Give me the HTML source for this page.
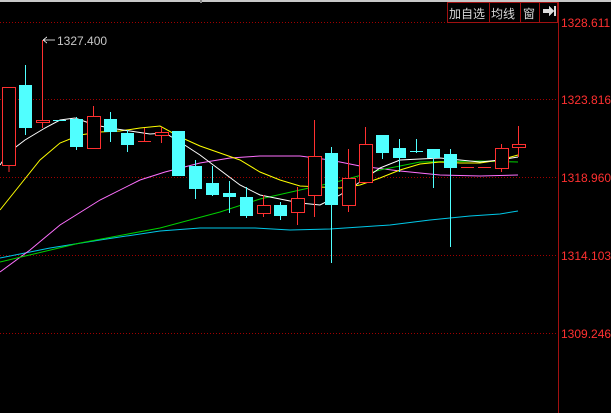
<!DOCTYPE html>
<html><head><meta charset="utf-8"><style>
html,body{margin:0;padding:0;background:#000;width:611px;height:413px;overflow:hidden}
svg{display:block}
</style></head><body>
<svg width="611" height="413" xmlns="http://www.w3.org/2000/svg" shape-rendering="crispEdges">
<rect width="611" height="413" fill="#000"/>
<rect x="0" y="0" width="611" height="2" fill="#c8c8c8"/>
<rect x="200" y="0" width="2" height="3" fill="#888"/>
<g stroke="#a00000" stroke-dasharray="1 2" stroke-width="1">
<line x1="0" y1="22.5" x2="556" y2="22.5"/>
<line x1="0" y1="99.5" x2="556" y2="99.5"/>
<line x1="0" y1="177.5" x2="556" y2="177.5"/>
<line x1="0" y1="255.5" x2="556" y2="255.5"/>
<line x1="0" y1="333.5" x2="556" y2="333.5"/>
</g>
<line x1="558.5" y1="2" x2="558.5" y2="413" stroke="#a01010"/>
<g font-family="Liberation Sans, sans-serif" font-size="12" fill="#ff3030">
<text x="561" y="27">1328.611</text>
<text x="561" y="104">1323.816</text>
<text x="561" y="182">1318.960</text>
<text x="561" y="260">1314.103</text>
<text x="561" y="338">1309.246</text>
</g>
<g fill="none" stroke="#a01010">
<rect x="447.5" y="2.5" width="110" height="20"/>
<line x1="489.5" y1="2" x2="489.5" y2="22"/>
<line x1="520.5" y1="2" x2="520.5" y2="22"/>
<line x1="539.5" y1="2" x2="539.5" y2="22"/>
</g>
<g font-family="Liberation Sans, 'Noto Sans CJK SC', sans-serif" font-size="12" fill="#d8d8d8">
<text x="449" y="18">加自选</text>
<text x="491" y="18">均线</text>
<text x="523" y="18">窗</text>
</g>
<path d="M543 9h6v-3l5 5-5 5v-3h-6z" fill="#ddd"/><rect x="554" y="6" width="2" height="10" fill="#ddd"/>
<g font-family="Liberation Sans, sans-serif" font-size="12" fill="#c8c8c8"><text x="57" y="45">1327.400</text></g>
<path d="M43 40h12M43 40l4-3M43 40l4 3" stroke="#c8c8c8" fill="none"/>
<g fill="none" stroke-width="1" shape-rendering="auto">
<polyline stroke="#00c8e8" points="0,258 50,248 100,240 160,231 200,228 255,228 290,230 330,229 360,227 390,225 430,220 470,216 500,214 518,211"/>
<polyline stroke="#ff70ff" points="0,272 30,250 60,225 100,200 140,180 165,172 200,163 230,158 260,156 300,156 330,160 360,166 400,171 440,175 480,176 518,175"/>
<polyline stroke="#00d000" points="0,262 80,243 160,228 220,212 260,199 300,190 340,181 380,170 420,162 480,161 518,162"/>
<polyline stroke="#ffff00" points="0,210 20,185 40,160 60,143 80,135 100,132 120,131 140,128 160,126 180,137 200,146 220,153 240,160 260,172 280,180 300,186 320,187 340,188 360,185 380,178 400,170 420,164 440,162 460,163 480,163 500,160 518,155"/>
<polyline stroke="#ffffff" points="0,165 8,153 25,140 45,128 60,120 75,118 95,125 110,128 130,131 150,134 165,133 180,142 200,155 220,170 240,185 260,195 280,199 300,203 320,205 340,195 360,182 380,168 400,160 420,159 440,158 460,160 480,162 500,160 518,157"/>
</g>
<g id="c"></g>
<!-- candles -->
<g stroke-width="1">
<!-- red hollow -->
<g stroke="#ff3030" fill="#000">
<line x1="9" y1="165" x2="9" y2="172"/><rect x="2.5" y="87.5" width="13" height="78"/>
<line x1="42.5" y1="40" x2="42.5" y2="128"/><rect x="36.5" y="120.5" width="13" height="2"/>
<line x1="93.5" y1="106" x2="93.5" y2="149"/><rect x="87.5" y="116.5" width="13" height="32"/>
<line x1="144.5" y1="128" x2="144.5" y2="142"/><line x1="138" y1="141.5" x2="151" y2="141.5"/>
<line x1="161.5" y1="127" x2="161.5" y2="143"/><rect x="155.5" y="132.5" width="13" height="3"/>
<line x1="263.5" y1="195" x2="263.5" y2="217"/><rect x="257.5" y="205.5" width="13" height="8"/>
<line x1="297.5" y1="187" x2="297.5" y2="225"/><rect x="291.5" y="198.5" width="13" height="14"/>
<line x1="314.5" y1="120" x2="314.5" y2="217"/><rect x="308.5" y="156.5" width="13" height="39"/>
<line x1="348.5" y1="149" x2="348.5" y2="212"/><rect x="342.5" y="178.5" width="13" height="27"/>
<line x1="365.5" y1="127" x2="365.5" y2="182"/><rect x="359.5" y="144.5" width="13" height="38"/>
<line x1="461" y1="167.5" x2="474" y2="167.5"/>
<line x1="478" y1="167.5" x2="491" y2="167.5"/>
<line x1="501.5" y1="144" x2="501.5" y2="172"/><rect x="495.5" y="148.5" width="13" height="20"/>
<line x1="518.5" y1="126" x2="518.5" y2="157"/><rect x="512.5" y="144.5" width="13" height="3"/>
</g>
<!-- cyan filled -->
<g stroke="#50ffff" fill="#50ffff">
<line x1="25.5" y1="65" x2="25.5" y2="135"/><rect x="19.5" y="85.5" width="12" height="42"/>
<line x1="53" y1="120.5" x2="66" y2="120.5"/>
<line x1="76.5" y1="117" x2="76.5" y2="150"/><rect x="70.5" y="119.5" width="12" height="27"/>
<line x1="110.5" y1="112" x2="110.5" y2="142"/><rect x="104.5" y="119.5" width="12" height="12"/>
<line x1="127.5" y1="130" x2="127.5" y2="152"/><rect x="121.5" y="133.5" width="12" height="11"/>
<rect x="172.5" y="131.5" width="12" height="44"/>
<line x1="195.5" y1="160" x2="195.5" y2="199"/><rect x="189.5" y="166.5" width="12" height="22"/>
<line x1="212.5" y1="166" x2="212.5" y2="196"/><rect x="206.5" y="183.5" width="12" height="11"/>
<line x1="229.5" y1="181" x2="229.5" y2="213"/><rect x="223.5" y="193.5" width="12" height="3"/>
<line x1="246.5" y1="187" x2="246.5" y2="218"/><rect x="240.5" y="197.5" width="12" height="18"/>
<line x1="280.5" y1="202" x2="280.5" y2="220"/><rect x="274.5" y="205.5" width="12" height="10"/>
<line x1="331.5" y1="147" x2="331.5" y2="263"/><rect x="325.5" y="153.5" width="12" height="51"/>
<line x1="382.5" y1="135" x2="382.5" y2="159"/><rect x="376.5" y="135.5" width="12" height="17"/>
<line x1="399.5" y1="139" x2="399.5" y2="172"/><rect x="393.5" y="148.5" width="12" height="9"/>
<line x1="416.5" y1="139" x2="416.5" y2="153"/><line x1="410" y1="151.5" x2="423" y2="151.5"/>
<line x1="433.5" y1="149" x2="433.5" y2="188"/><rect x="427.5" y="149.5" width="12" height="8"/>
<line x1="450.5" y1="149" x2="450.5" y2="247"/><rect x="444.5" y="154.5" width="12" height="13"/>
</g>
</g>
</svg>
</body></html>
